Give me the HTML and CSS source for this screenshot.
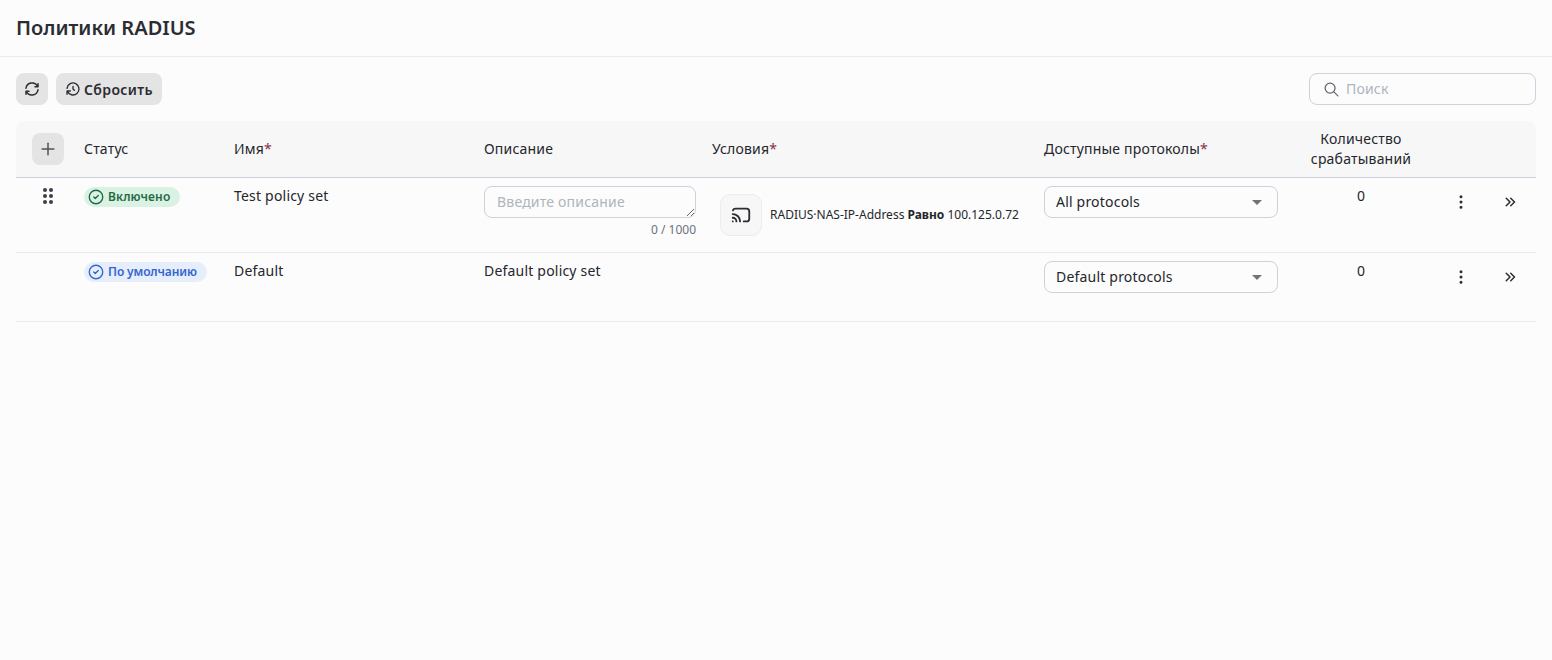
FILE: index.html
```html
<!DOCTYPE html>
<html lang="ru">
<head>
    <meta charset="UTF-8">
    <title>Политики RADIUS</title>
    <link rel="stylesheet" href="styles.css">
</head>
<body>
    <header class="page-header">
        <h1>Политики RADIUS</h1>
    </header>
    <div class="toolbar">
        <div class="toolbar-buttons">
            <button class="btn btn-icon">
                <svg class="icon" viewBox="0 0 24 24"><path d="M4 11a8.1 8.1 0 0 1 15.5 -2m.5 -4v4h-4"/><path d="M20 13a8.1 8.1 0 0 1 -15.5 2m-.5 4v-4h4"/></svg>
            </button>
            <button class="btn btn-reset">
                <svg class="icon icon-small" viewBox="0 0 24 24"><path d="M12 8v4l2 2"/><path d="M3.05 11a9 9 0 1 1 .5 4m-.5 5v-5h5"/></svg>
                Сбросить
            </button>
        </div>
        <label class="search">
            <svg class="icon icon-search" viewBox="0 0 24 24"><path d="M10 10m-7 0a7 7 0 1 0 14 0a7 7 0 1 0 -14 0"/><path d="M21 21l-6 -6"/></svg>
            <input type="text" placeholder="Поиск">
        </label>
    </div>
    <main class="policies">
        <div class="policy-row policy-head">
            <div class="cell cell-add">
                <button class="btn btn-icon">
                    <svg class="icon icon-plus" viewBox="0 0 24 24"><path d="M12 5v14"/><path d="M5 12h14"/></svg>
                </button>
            </div>
            <div class="cell">Статус</div>
            <div class="cell">Имя<span class="required">*</span></div>
            <div class="cell">Описание</div>
            <div class="cell">Условия<span class="required">*</span></div>
            <div class="cell">Доступные протоколы<span class="required">*</span></div>
            <div class="cell cell-count">Количество срабатываний</div>
            <div class="cell"></div>
            <div class="cell"></div>
        </div>

        <div class="policy-row policy-first">
            <div class="cell cell-grip">
                <svg class="grip" viewBox="0 0 12 16">
                    <circle cx="2" cy="2" r="2"/><circle cx="8" cy="2" r="2"/>
                    <circle cx="2" cy="8" r="2"/><circle cx="8" cy="8" r="2"/>
                    <circle cx="2" cy="14" r="2"/><circle cx="8" cy="14" r="2"/>
                </svg>
            </div>
            <div class="cell">
                <span class="badge badge-green">
                    <svg class="icon icon-badge" viewBox="0 0 24 24"><path d="M3 12a9 9 0 1 0 18 0a9 9 0 1 0 -18 0"/><path d="M9 12l2 2l4 -4"/></svg>
                    Включено
                </span>
            </div>
            <div class="cell cell-text">Test policy set</div>
            <div class="cell">
                <textarea class="description" placeholder="Введите описание"></textarea>
                <div class="counter">0 / 1000</div>
            </div>
            <div class="cell condition">
                <span class="condition-icon">
                    <svg class="icon icon-cast" viewBox="0 0 24 24"><path d="M3 19l.01 0"/><path d="M7 19a4 4 0 0 0 -4 -4"/><path d="M11 19a8 8 0 0 0 -8 -8"/><path d="M15 19h3a3 3 0 0 0 3 -3v-8a3 3 0 0 0 -3 -3h-12a3 3 0 0 0 -2.8 2"/></svg>
                </span>
                <span class="condition-text">RADIUS·NAS-IP-Address <b>Равно</b> 100.125.0.72</span>
            </div>
            <div class="cell">
                <div class="select">All protocols<span class="caret"></span></div>
            </div>
            <div class="cell cell-count cell-text">0</div>
            <div class="cell cell-action">
                <svg class="icon" viewBox="0 0 24 24"><path d="M11 5a1 1 0 1 0 2 0a1 1 0 1 0 -2 0"/><path d="M11 12a1 1 0 1 0 2 0a1 1 0 1 0 -2 0"/><path d="M11 19a1 1 0 1 0 2 0a1 1 0 1 0 -2 0"/></svg>
            </div>
            <div class="cell cell-action">
                <svg class="icon" viewBox="0 0 24 24"><path d="M7 7l5 5l-5 5"/><path d="M13 7l5 5l-5 5"/></svg>
            </div>
        </div>

        <div class="policy-row policy-default">
            <div class="cell"></div>
            <div class="cell">
                <span class="badge badge-blue">
                    <svg class="icon icon-badge" viewBox="0 0 24 24"><path d="M3 12a9 9 0 1 0 18 0a9 9 0 1 0 -18 0"/><path d="M9 12l2 2l4 -4"/></svg>
                    По умолчанию
                </span>
            </div>
            <div class="cell cell-text">Default</div>
            <div class="cell cell-text">Default policy set</div>
            <div class="cell"></div>
            <div class="cell">
                <div class="select">Default protocols<span class="caret"></span></div>
            </div>
            <div class="cell cell-count cell-text">0</div>
            <div class="cell cell-action">
                <svg class="icon" viewBox="0 0 24 24"><path d="M11 5a1 1 0 1 0 2 0a1 1 0 1 0 -2 0"/><path d="M11 12a1 1 0 1 0 2 0a1 1 0 1 0 -2 0"/><path d="M11 19a1 1 0 1 0 2 0a1 1 0 1 0 -2 0"/></svg>
            </div>
            <div class="cell cell-action">
                <svg class="icon" viewBox="0 0 24 24"><path d="M7 7l5 5l-5 5"/><path d="M13 7l5 5l-5 5"/></svg>
            </div>
        </div>
    </main>
</body>
</html>
```
FILE: styles.css
```css
* {
    box-sizing: border-box;
}
body {
    margin: 0;
    min-height: 100vh;
    background-color: #fcfcfc;
    color: #25262b;
    font-family: "Noto Sans", sans-serif;
    font-size: 14px;
    line-height: 20px;
    letter-spacing: 0.2px;
}
.page-header {
    height: 57px;
    padding: 0 16px;
    display: flex;
    align-items: center;
    border-bottom: 1px solid #e9ecef;
}
.page-header h1 {
    margin: 0;
    font-size: 20px;
    font-weight: 600;
    color: #2b2d33;
    letter-spacing: 0;
}
.toolbar {
    display: flex;
    justify-content: space-between;
    padding: 16px 16px;
}
.toolbar-buttons {
    display: flex;
    gap: 8px;
}
.btn {
    height: 32px;
    border: none;
    border-radius: 8px;
    background-color: #e4e4e4;
    color: #2b2d33;
    font-family: inherit;
    font-size: 14px;
    font-weight: 600;
    letter-spacing: 0.35px;
    display: flex;
    align-items: center;
    justify-content: center;
    padding: 0;
}
.btn-icon {
    width: 32px;
}
.btn-reset {
    gap: 3px;
    padding: 0 9px;
}
.icon {
    width: 18px;
    height: 18px;
    fill: none;
    stroke: #2b2d33;
    stroke-width: 2;
    stroke-linecap: round;
    stroke-linejoin: round;
    flex: none;
}
.icon-small {
    width: 16px;
    height: 16px;
}
.icon-plus {
    stroke: #50535b;
    stroke-width: 1.8;
    width: 20px;
    height: 20px;
}
.icon-cast {
    width: 22px;
    height: 22px;
}
.search {
    width: 227px;
    height: 32px;
    border: 1px solid #ced0dc;
    border-radius: 8px;
    display: flex;
    align-items: center;
    gap: 6px;
    padding: 0 13px;
}
.icon-search {
    width: 17px;
    height: 17px;
    stroke: #62666f;
    stroke-width: 1.8;
}
.search input {
    border: none;
    outline: none;
    background: transparent;
    font-family: inherit;
    font-size: 14px;
    letter-spacing: inherit;
    width: 100%;
    padding: 0 0 1px;
}
.search input::placeholder,
.description::placeholder {
    color: #adb5bd;
    opacity: 1;
}
.policies {
    margin: 0 16px;
}
.policy-row {
    display: grid;
    grid-template-columns: 68px 150px 250px 228px 332px 250px 134px 66px 42px;
    border-bottom: 1px solid #e9ecef;
}
.policy-head {
    height: 57px;
    background-color: #f7f7f7;
    border-bottom-color: #ced0dc;
    border-radius: 8px 8px 0 0;
    align-items: center;
}
.policy-first {
    height: 75px;
    padding-top: 8px;
}
.policy-default {
    height: 69px;
    padding-top: 8px;
}
.cell-add {
    padding-left: 16px;
}
.required {
    color: #8c2f46;
}
.cell-count {
    text-align: center;
}
.cell-text {
    line-height: 20px;
}
.cell-grip {
    padding-left: 27px;
    padding-top: 2px;
}
.grip {
    display: block;
    width: 12px;
    height: 16px;
    fill: #3b3e46;
}
.badge {
    display: inline-flex;
    align-items: center;
    gap: 3px;
    height: 20px;
    margin-top: 1px;
    padding: 0 10px 0 3px;
    border-radius: 10px;
    font-size: 12px;
    font-weight: 600;
    line-height: 20px;
}
.icon-badge {
    width: 18px;
    height: 18px;
    stroke-width: 1.8;
}
.badge-green {
    background-color: #d9f2e3;
    color: #1f6b45;
    letter-spacing: 0.12px;
}
.badge-green .icon-badge {
    stroke: #1f6b45;
}
.badge-blue {
    background-color: #e6eefb;
    color: #3565d0;
    letter-spacing: -0.12px;
}
.badge-blue .icon-badge {
    stroke: #3565d0;
}
.description {
    display: block;
    width: 212px;
    height: 32px;
    padding: 5px 12px;
    border: 1px solid #ced0dc;
    border-radius: 8px;
    background: transparent;
    font-family: inherit;
    font-size: 14px;
    line-height: 20px;
    letter-spacing: inherit;
    outline: none;
}
.counter {
    width: 212px;
    margin-top: 3px;
    text-align: right;
    font-size: 12px;
    line-height: 18px;
    letter-spacing: 0;
    color: #6b7280;
}
.condition {
    display: flex;
    align-items: flex-start;
    gap: 8px;
    padding: 8px 0 0 8px;
}
.condition-icon {
    width: 42px;
    height: 42px;
    border: 1px solid #ececec;
    border-radius: 10px;
    background-color: #f7f7f7;
    display: flex;
    align-items: center;
    justify-content: center;
}
.condition-text {
    font-size: 12px;
    line-height: 42px;
    letter-spacing: 0;
    white-space: nowrap;
}
.select {
    position: relative;
    width: 234px;
    height: 32px;
    padding: 0 11px;
    border: 1px solid #ced0dc;
    border-radius: 8px;
    line-height: 30px;
}
.caret {
    position: absolute;
    right: 15px;
    top: 13px;
    border-left: 5px solid transparent;
    border-right: 5px solid transparent;
    border-top: 5px solid #70737a;
}
.cell-action {
    height: 32px;
    display: flex;
    align-items: center;
    padding-left: 24px;
}
.cell-action:last-child {
    padding-left: 7px;
}
```
